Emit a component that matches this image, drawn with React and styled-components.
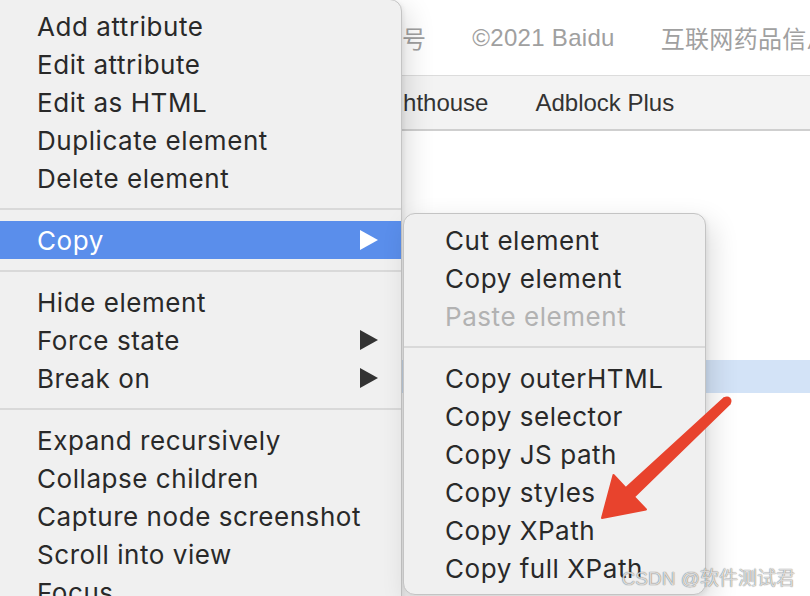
import React from "react";
import styled, { createGlobalStyle } from "styled-components";

const GlobalStyle = createGlobalStyle`
  html, body { margin: 0; padding: 0; background: #ffffff; }
  body { overflow: hidden; font-family: "Liberation Sans", "Noto Sans CJK SC", sans-serif; }
`;

const Page = styled.div`
  position: relative;
  width: 810px;
  height: 596px;
  overflow: hidden;
  background: #ffffff;
  display: flex;
  flex-direction: column;
`;

const FooterStrip = styled.div`
  height: 75px;
  flex: none;
  display: flex;
  align-items: center;
  gap: 46px;
  padding-left: 402px;
  border-bottom: 1px solid #dcdcdc;
  font-family: "Liberation Sans", "Noto Sans CJK SC", sans-serif;
  font-size: 24px;
  letter-spacing: 0.3px;
  color: #a0a0a0;
  white-space: nowrap;
`;

const Toolbar = styled.div`
  height: 53px;
  flex: none;
  display: flex;
  align-items: center;
  gap: 47px;
  padding-left: 371px;
  background: #f3f3f3;
  border-bottom: 2px solid #cfcfcf;
  font-family: "Liberation Sans", sans-serif;
  font-size: 24px;
  color: #333333;
  white-space: nowrap;
`;

const DomPanel = styled.div`
  flex: 1;
  display: flex;
  flex-direction: column;
  padding-top: 229px;
  background: #ffffff;
`;

const DomRow = styled.div`
  height: 33px;
  background: ${(p) => (p.$selected ? "#d3e3f7" : "transparent")};
`;

const Menu = styled.div`
  position: absolute;
  left: ${(p) => p.$x}px;
  top: ${(p) => p.$y}px;
  width: ${(p) => p.$w}px;
  box-sizing: border-box;
  padding: ${(p) => p.$padTop}px 0 7px;
  background: #f0f0f0;
  border: 1px solid #c4c4c4;
  border-radius: 12px;
  box-shadow: 6px 10px 28px rgba(0, 0, 0, 0.14), 2px 2px 4px rgba(0, 0, 0, 0.06);
  font-family: Inter, "Liberation Sans", sans-serif;
  font-size: 26px;
  letter-spacing: 0.55px;
  color: #292929;
  display: flex;
  flex-direction: column;
`;

const Item = styled.div`
  height: 38px;
  flex: none;
  display: flex;
  align-items: center;
  justify-content: space-between;
  padding-left: ${(p) => p.$indent}px;
  padding-right: 23px;
  background: ${(p) => (p.$active ? "#5a8eeb" : "transparent")};
  color: ${(p) => (p.$active ? "#ffffff" : p.$disabled ? "#b2b2b2" : "#292929")};
  white-space: nowrap;
`;

const Arrow = styled.span`
  width: 0;
  height: 0;
  border-top: 10px solid transparent;
  border-bottom: 10px solid transparent;
  border-left: 18px solid ${(p) => (p.$light ? "#ffffff" : "#333333")};
`;

const Separator = styled.div`
  height: 24px;
  flex: none;
  display: flex;
  align-items: center;
  &::after {
    content: "";
    flex: 1;
    height: 2px;
    background: #d9d9d9;
  }
`;

const Annotation = styled.svg`
  position: absolute;
  left: 0;
  top: 0;
  pointer-events: none;
`;

const Watermark = styled.div`
  position: absolute;
  right: 15px;
  bottom: 6px;
  font-family: "Liberation Sans", "Noto Sans CJK SC", sans-serif;
  font-size: 19px;
  color: rgba(255, 255, 255, 0.75);
  text-shadow: 0 0 1px rgba(0, 0, 0, 0.5), 0 0 1px rgba(0, 0, 0, 0.3);
  white-space: nowrap;
`;

const mainGroups = [
  [
    { label: "Add attribute" },
    { label: "Edit attribute" },
    { label: "Edit as HTML" },
    { label: "Duplicate element" },
    { label: "Delete element" },
  ],
  [{ label: "Copy", sub: true, active: true }],
  [
    { label: "Hide element" },
    { label: "Force state", sub: true },
    { label: "Break on", sub: true },
  ],
  [
    { label: "Expand recursively" },
    { label: "Collapse children" },
    { label: "Capture node screenshot" },
    { label: "Scroll into view" },
    { label: "Focus" },
  ],
];

const subGroups = [
  [
    { label: "Cut element" },
    { label: "Copy element" },
    { label: "Paste element", disabled: true },
  ],
  [
    { label: "Copy outerHTML" },
    { label: "Copy selector" },
    { label: "Copy JS path" },
    { label: "Copy styles" },
    { label: "Copy XPath" },
    { label: "Copy full XPath" },
  ],
];

function MenuGroups({ groups, indent }) {
  return groups.map((group, gi) => (
    <React.Fragment key={gi}>
      {gi > 0 && <Separator />}
      {group.map((it) => (
        <Item key={it.label} $indent={indent} $active={it.active} $disabled={it.disabled}>
          <span>{it.label}</span>
          {it.sub && <Arrow $light={it.active} />}
        </Item>
      ))}
    </React.Fragment>
  ));
}

export default function App() {
  const rows = Array.from({ length: 8 }, (_, i) => i);
  return (
    <>
      <GlobalStyle />
      <Page>
        <FooterStrip>
          <span>号</span>
          <span>©2021 Baidu</span>
          <span>互联网药品信息服务资格证书</span>
        </FooterStrip>
        <Toolbar>
          <span>Lighthouse</span>
          <span>Adblock Plus</span>
        </Toolbar>
        <DomPanel>
          {rows.map((i) => (
            <DomRow key={i} $selected={i === 0} />
          ))}
        </DomPanel>

        <Menu $x={-12} $y={-1} $w={414} $padTop={7}>
          <MenuGroups groups={mainGroups} indent={48} />
        </Menu>

        <Menu $x={403} $y={213} $w={303} $padTop={7}>
          <MenuGroups groups={subGroups} indent={41} />
        </Menu>

        <Annotation width="810" height="596" viewBox="0 0 810 596">
          <polygon
            points="724.3,398.1 625.9,488.1 613.5,475 602,518 646,509.5 634.1,496.9 729.7,403.9"
            fill="#e8432d"
            stroke="#e8432d"
            strokeWidth="2"
            strokeLinejoin="round"
          />
          <circle cx="727" cy="401" r="4.5" fill="#e8432d" />
        </Annotation>

        <Watermark>CSDN @软件测试君</Watermark>
      </Page>
    </>
  );
}
